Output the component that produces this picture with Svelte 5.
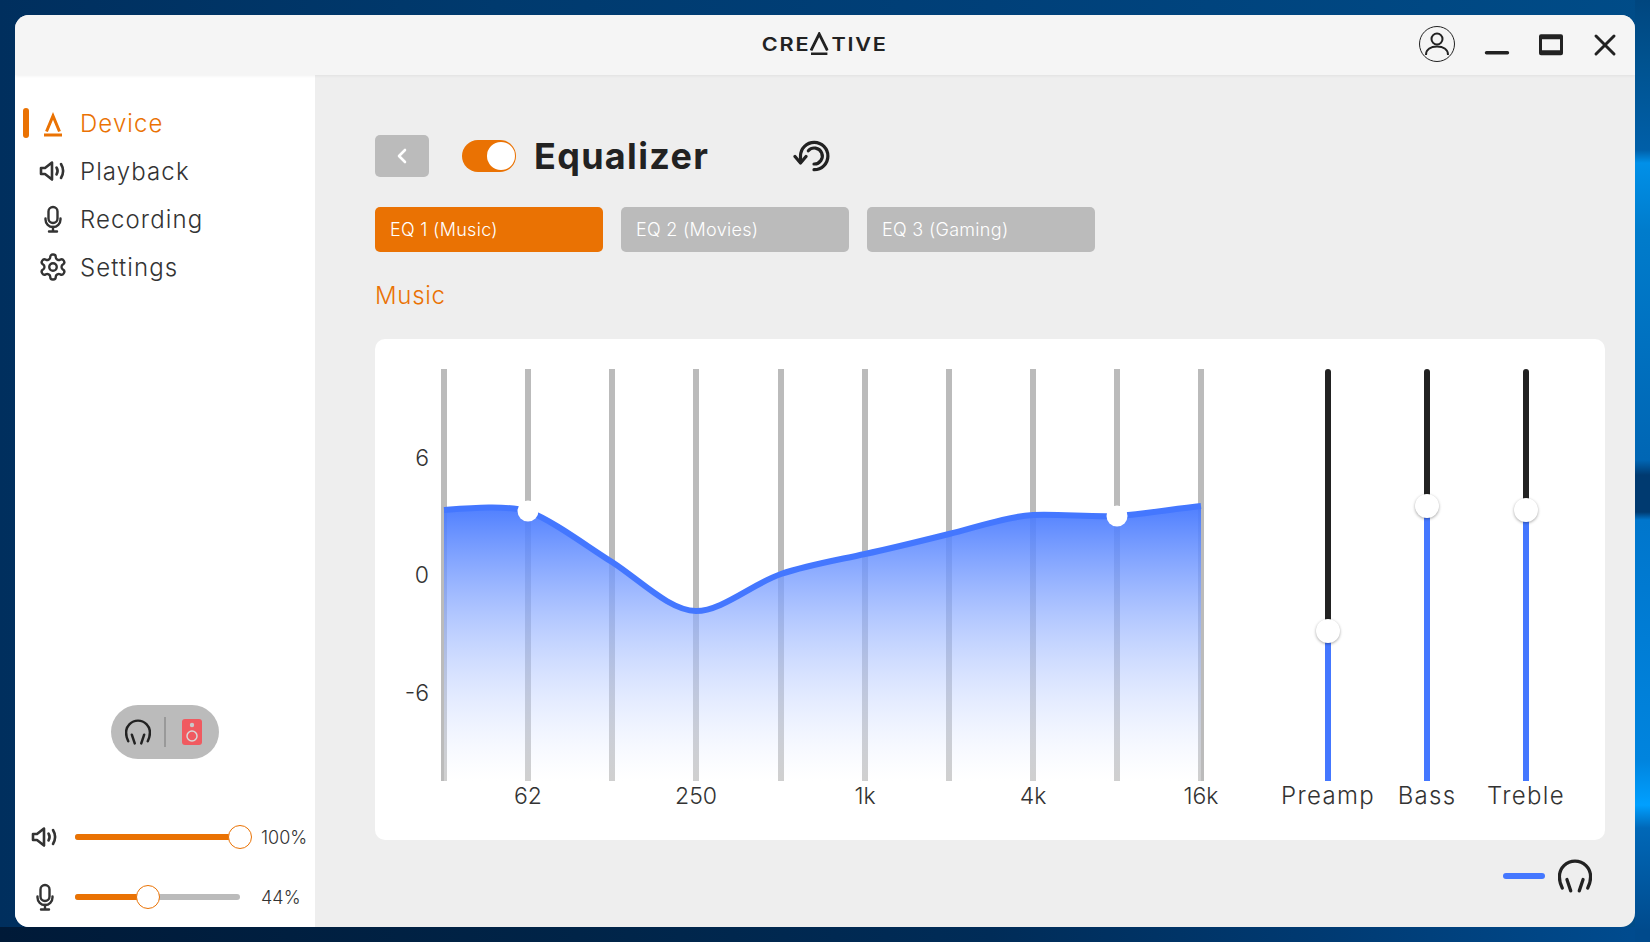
<script lang="ts">
  // Pantalla de ecualizador: barra de título, menú lateral y panel con la curva.
  const nav = [
    { label: 'Device', icon: 'logo', active: true },
    { label: 'Playback', icon: 'speaker' },
    { label: 'Recording', icon: 'mic' },
    { label: 'Settings', icon: 'gear' }
  ];
  const tabs = ['EQ 1 (Music)', 'EQ 2 (Movies)', 'EQ 3 (Gaming)'];
  const bands = [444, 528, 612, 696, 781, 865, 949, 1033, 1117, 1201];
  const xLabels = [
    { x: 528, t: '62' },
    { x: 696, t: '250' },
    { x: 865, t: '1k' },
    { x: 1033, t: '4k' },
    { x: 1201, t: '16k' }
  ];
  const yLabels = [
    { y: 466, t: '6' },
    { y: 583, t: '0' },
    { y: 701, t: '-6' }
  ];
  const curve =
    'M444 510 C470 508 505 505 528 511 C555 522 585 545 612 562 C640 580 670 611 696 611 C722 611 752 584 781 574 C808 565 838 560 865 554 C893 548 921 541 949 534 C977 527 1005 517 1033 515 C1061 514 1089 517 1117 516 C1145 514 1173 509 1201 506';
  const faders = [
    { label: 'Preamp', top: 262 },
    { label: 'Bass', top: 137 },
    { label: 'Treble', top: 141 }
  ];
  const levels = [
    { icon: 'speaker', value: 100 },
    { icon: 'mic', value: 44 }
  ];
</script>

{#snippet icon(name: string)}
  {#if name === 'logo'}
    <svg class="ico" viewBox="0 0 30 30" fill="none" stroke="currentColor" stroke-width="3">
      <path d="M8.500 23.500 15 8 21.500 23.500" />
      <path d="M6 27h18" />
    </svg>
  {:else if name === 'speaker'}
    <svg class="ico" viewBox="0 0 30 30" fill="none" stroke="currentColor" stroke-width="2.600" stroke-linecap="round" stroke-linejoin="round">
      <path d="M3 12v6h4l7 5.500v-17L7 12z" />
      <path d="M18.500 11.500c1.400 2.200 1.400 4.800 0 7" />
      <path d="M23 8c2.600 4.300 2.600 9.700 0 14" />
    </svg>
  {:else if name === 'mic'}
    <svg class="ico" viewBox="0 0 30 30" fill="none" stroke="currentColor" stroke-width="2.400" stroke-linecap="round" stroke-linejoin="round">
      <rect x="10.500" y="3" width="9" height="16" rx="4.500" />
      <path d="M7.500 14.500v1a7.500 7.500 0 0 0 15 0v-1" />
      <path d="M15 23v4M11 27.500h8" />
    </svg>
  {:else if name === 'gear'}
    <svg class="ico" viewBox="0 0 24 24" fill="none" stroke="currentColor" stroke-width="1.900" stroke-linecap="round" stroke-linejoin="round">
      <path d="M12.220 2h-.44a2 2 0 0 0-2 2v.18a2 2 0 0 1-1 1.730l-.43.25a2 2 0 0 1-2 0l-.15-.08a2 2 0 0 0-2.730.73l-.22.38a2 2 0 0 0 .73 2.730l.15.1a2 2 0 0 1 1 1.720v.51a2 2 0 0 1-1 1.740l-.15.09a2 2 0 0 0-.73 2.730l.22.38a2 2 0 0 0 2.730.73l.15-.08a2 2 0 0 1 2 0l.43.25a2 2 0 0 1 1 1.730V20a2 2 0 0 0 2 2h.44a2 2 0 0 0 2-2v-.18a2 2 0 0 1 1-1.730l.43-.25a2 2 0 0 1 2 0l.15.08a2 2 0 0 0 2.730-.73l.22-.39a2 2 0 0 0-.73-2.730l-.15-.08a2 2 0 0 1-1-1.740v-.5a2 2 0 0 1 1-1.740l.15-.09a2 2 0 0 0 .73-2.730l-.22-.38a2 2 0 0 0-2.730-.73l-.15.08a2 2 0 0 1-2 0l-.43-.25a2 2 0 0 1-1-1.730V4a2 2 0 0 0-2-2z" />
      <circle cx="12" cy="12" r="3" />
    </svg>
  {/if}
{/snippet}

{#snippet phones(size: number)}
  <svg class="phones" width={size} height={size} viewBox="0 0 24 24" fill="none" stroke="#222" stroke-width="2.300" stroke-linecap="round">
    <path d="M3 20.500C1.700 18 1 15 1 12.500a11 11 0 0 1 22 0c0 2.500-.7 5.500-2 8" />
    <path d="M6.300 14.500l2.700 8M17.700 14.500l-2.700 8" />
  </svg>
{/snippet}

<div class="desktop">
  <div class="window">
    <header class="titlebar">
      <div class="logo" aria-label="CREATIVE">
        <span>CRE</span>
        <svg width="16" height="24" viewBox="0 0 16 24" fill="none" stroke="#222" stroke-width="2.500">
          <path d="M1 18.500 8 2l7 16.500" />
          <path d="M1 21.800h14" />
        </svg>
        <span>TIVE</span>
      </div>
      <div class="win-controls">
        <svg width="38" height="38" viewBox="0 0 38 38" fill="none" stroke="#222">
          <circle cx="19" cy="19" r="17.500" stroke-width="1" />
          <circle cx="19" cy="14" r="5.500" stroke-width="2" />
          <path d="M8 30c0-6 5-8.500 11-8.500S30 24 30 30" stroke-width="2" />
        </svg>
        <svg class="ctl" width="26" height="26" viewBox="0 0 26 26" fill="none" stroke="#222" stroke-width="3.400" stroke-linecap="round">
          <path d="M2.500 21.700h21" />
        </svg>
        <svg class="ctl" width="26" height="26" viewBox="0 0 26 26" fill="#222">
          <path fill-rule="evenodd" d="M3 3.300h20a2 2 0 0 1 2 2v17a2 2 0 0 1-2 2H3a2 2 0 0 1-2-2v-17a2 2 0 0 1 2-2zm1 5v11h18v-11z" />
        </svg>
        <svg class="ctl" width="26" height="26" viewBox="0 0 26 26" fill="none" stroke="#222" stroke-width="3" stroke-linecap="round">
          <path d="M4 5l18 18M22 5 4 23" />
        </svg>
      </div>
    </header>

    <div class="body">
      <aside class="sidebar">
        <nav>
          {#each nav as item}
            <div class="nav-item" class:active={item.active}>
              <span class="marker"></span>
              {@render icon(item.icon)}
              <span>{item.label}</span>
            </div>
          {/each}
        </nav>

        <div class="output-pill">
          {@render phones(26)}
          <span class="pill-divider"></span>
          <svg width="22" height="28" viewBox="0 0 22 28">
            <rect x="1" y="1" width="20" height="26" rx="3" fill="#f05a60" />
            <circle cx="11" cy="7" r="2.200" fill="#c9c9c9" />
            <circle cx="11" cy="18" r="5" fill="none" stroke="#d8d8d8" stroke-width="1.500" />
          </svg>
        </div>

        <div class="levels">
          {#each levels as level}
            <div class="level">
              {@render icon(level.icon)}
              <div class="track">
                <div class="fill" style="width: {level.value}%"></div>
                <div class="knob" style="left: {level.value}%"></div>
              </div>
              <span class="pct">{level.value}%</span>
            </div>
          {/each}
        </div>
      </aside>

      <main class="content">
        <div class="head">
          <button class="back" aria-label="Back">
            <svg width="14" height="18" viewBox="0 0 14 18" fill="none" stroke="#fff" stroke-width="2.600" stroke-linecap="round" stroke-linejoin="round">
              <path d="M10 3 4 9l6 6" />
            </svg>
          </button>
          <span class="toggle"><span class="toggle-knob"></span></span>
          <h1>Equalizer</h1>
          <svg class="reset" width="40" height="36" viewBox="0 0 40 36" fill="none" stroke="#222" stroke-width="3.200" stroke-linecap="round" stroke-linejoin="round">
            <path d="M7.500 24V18A13.700 13.700 0 1 1 21 31.700" />
            <path d="M2 18.500 7.500 25 13 18.500" />
            <path d="M15.300 12.700A8 8 0 1 1 21 26" />
          </svg>
        </div>

        <div class="tabs">
          {#each tabs as tab, i}
            <div class="tab" class:on={i === 0}>{tab}</div>
          {/each}
        </div>

        <div class="preset">Music</div>

        <section class="card">
          <svg class="chart" width="950" height="501" viewBox="375 339 950 501">
            <defs>
              <linearGradient id="eqfill" gradientUnits="userSpaceOnUse" x1="0" y1="505" x2="0" y2="781">
                <stop offset="0" stop-color="#4477ff" stop-opacity="0.95" />
                <stop offset="1" stop-color="#ffffff" stop-opacity="0.3" />
              </linearGradient>
            </defs>
            {#each bands as x}
              <rect x={x - 3} y="369" width="6" height="412" fill="#bbbbbb" />
            {/each}
            <path d="{curve} L1201 781 L444 781 Z" fill="url(#eqfill)" />
            <path d={curve} fill="none" stroke="#4477ff" stroke-width="6" />
            <circle cx="528" cy="511" r="10.500" fill="#fff" />
            <circle cx="1117" cy="516" r="10.500" fill="#fff" />
            {#each yLabels as l}
              <text class="axis" x="429" y={l.y} text-anchor="end">{l.t}</text>
            {/each}
            {#each xLabels as l}
              <text class="axis" x={l.x} y="804" text-anchor="middle">{l.t}</text>
            {/each}
          </svg>

          <div class="faders">
            {#each faders as f}
              <div class="fader">
                <div class="fader-track">
                  <div class="fader-low" style="top: {f.top}px"></div>
                  <div class="fader-knob" style="top: {f.top}px"></div>
                </div>
                <span class="fader-label">{f.label}</span>
              </div>
            {/each}
          </div>
        </section>

        <div class="legend">
          <span class="legend-line"></span>
          {@render phones(34)}
        </div>
      </main>
    </div>
  </div>
</div>

<style>
  :global(body) {
    margin: 0;
  }

  .desktop {
    box-sizing: border-box;
    width: 1650px;
    height: 942px;
    padding: 15px;
    overflow: hidden;
    font-family: Inter, "Open Sans", sans-serif;
    font-weight: 300;
    color: #333;
    background:
      linear-gradient(to bottom, #00467f 0, #00528f 60px, #005fa8 150px, #0090e8 163px, #007ccc 230px, #0066b4 460px, #003a70 475px, #003a70 512px, #0076cc 520px, #0084de 760px, #00a0ff 805px, #0068b8 828px, #004a8c 930px) right / 15px 100% no-repeat,
      linear-gradient(to right, #001a38 0, #002448 35%, #002c58 60%, #003a72 80%, #004c90 100%) bottom / 100% 15px no-repeat,
      linear-gradient(to right, #002f5e 0, #003a6e 30%, #004079 60%, #004c88 100%);
  }

  .window {
    display: flex;
    flex-direction: column;
    height: 912px;
    border-radius: 14px;
    overflow: hidden;
    background: #eeeeee;
  }

  .titlebar {
    position: relative;
    z-index: 1;
    flex: none;
    display: flex;
    align-items: center;
    justify-content: center;
    height: 60px;
    background: #f5f5f5;
    box-shadow: 0 1px 3px rgba(0, 0, 0, 0.06);
  }

  .logo {
    display: flex;
    align-items: center;
    margin-top: -2px;
    font-size: 18.500px;
    font-weight: 600;
    letter-spacing: 1.500px;
    color: #222;
    transform: scaleX(1.170);
  }

  .logo svg {
    margin: -1px 2px 0 0;
  }

  .win-controls {
    position: absolute;
    right: 17px;
    top: 10px;
    display: flex;
    align-items: center;
    gap: 28px;
  }

  .ctl {
    display: block;
  }

  .body {
    flex: 1;
    display: flex;
    min-height: 0;
  }

  .sidebar {
    flex: none;
    display: flex;
    flex-direction: column;
    width: 300px;
    background: #fff;
  }

  nav {
    padding-top: 24px;
  }

  .nav-item {
    display: flex;
    align-items: center;
    height: 48px;
    padding-left: 8px;
    font-size: 24px;
    letter-spacing: 1.100px;
    color: #333;
  }

  .nav-item.active {
    color: #ea7203;
  }

  .marker {
    width: 6px;
    height: 30px;
    margin-right: 9px;
    border-radius: 3px;
  }

  .nav-item.active .marker {
    background: #ea7203;
  }

  .ico {
    flex: none;
    width: 30px;
    height: 30px;
  }

  .nav-item .ico {
    margin-right: 12px;
  }

  .output-pill {
    display: flex;
    align-items: center;
    align-self: center;
    box-sizing: border-box;
    width: 108px;
    height: 54px;
    margin: auto 0 48px;
    padding-left: 14px;
    border-radius: 27px;
    background: #bbbbbb;
  }

  .pill-divider {
    width: 2px;
    height: 30px;
    margin: 0 15px 0 13px;
    background: #999;
  }

  .level {
    display: flex;
    align-items: center;
    height: 60px;
    padding-left: 15px;
    color: #333;
  }

  .track {
    position: relative;
    width: 165px;
    height: 6px;
    margin-left: 15px;
    border-radius: 3px;
    background: #bbbbbb;
  }

  .fill {
    height: 100%;
    border-radius: 3px;
    background: #ea7203;
  }

  .knob {
    position: absolute;
    top: 50%;
    box-sizing: border-box;
    width: 24px;
    height: 24px;
    margin: -12px 0 0 -12px;
    border: 1px solid #ea7203;
    border-radius: 50%;
    background: #fff;
  }

  .pct {
    margin-left: 21px;
    font-size: 18px;
  }

  .content {
    flex: 1;
    display: flex;
    flex-direction: column;
    min-width: 0;
    padding: 60px 30px 0 60px;
  }

  .head {
    display: flex;
    align-items: center;
    height: 42px;
  }

  .back {
    display: flex;
    align-items: center;
    justify-content: center;
    width: 54px;
    height: 42px;
    padding: 0;
    border: 0;
    border-radius: 5px;
    background: #bbbbbb;
  }

  .toggle {
    display: flex;
    align-items: center;
    justify-content: flex-end;
    box-sizing: border-box;
    width: 54px;
    height: 32px;
    margin-left: 33px;
    padding-right: 1px;
    border-radius: 16px;
    background: #ea7203;
  }

  .toggle-knob {
    width: 28px;
    height: 28px;
    border-radius: 50%;
    background: #fff;
  }

  h1 {
    width: 259px;
    margin: 0 0 0 18px;
    font-size: 36px;
    font-weight: 700;
    letter-spacing: 1.300px;
    color: #222;
  }

  .tabs {
    display: flex;
    gap: 18px;
    margin-top: 30px;
  }

  .tab {
    box-sizing: border-box;
    width: 228px;
    height: 45px;
    padding-left: 15px;
    line-height: 45px;
    font-size: 18px;
    letter-spacing: 0.300px;
    color: #fff;
    border-radius: 5px;
    background: #bbbbbb;
  }

  .tab.on {
    background: #ea7203;
  }

  .preset {
    height: 87px;
    padding-top: 27px;
    box-sizing: border-box;
    font-size: 24px;
    letter-spacing: 0.700px;
    line-height: 34px;
    color: #ea7203;
  }

  .card {
    display: flex;
    height: 501px;
    border-radius: 10px;
    background: #fff;
  }

  .chart {
    flex: none;
    display: block;
  }

  .axis {
    font-size: 23px;
    fill: #333;
  }

  .faders {
    display: flex;
    gap: 93px;
  }

  .fader {
    display: flex;
    flex-direction: column;
    align-items: center;
    width: 6px;
    padding-top: 30px;
  }

  .fader-track {
    position: relative;
    flex: none;
    width: 6px;
    height: 412px;
    border-radius: 3px 3px 0 0;
    background: #222;
  }

  .fader-low {
    position: absolute;
    left: 0;
    right: 0;
    bottom: 0;
    background: #4477ff;
  }

  .fader-knob {
    position: absolute;
    left: 50%;
    width: 24px;
    height: 24px;
    margin: -12px 0 0 -12px;
    border-radius: 50%;
    background: #fff;
    box-shadow: 0 1px 3px rgba(0, 0, 0, 0.35);
  }

  .fader-label {
    font-size: 24px;
    letter-spacing: 1.300px;
    line-height: 30px;
    white-space: nowrap;
    color: #333;
  }

  .legend {
    display: flex;
    align-items: center;
    justify-content: flex-end;
    gap: 13px;
    height: 36px;
    margin-top: 18px;
    padding-right: 13px;
  }

  .legend-line {
    width: 42px;
    height: 6px;
    border-radius: 3px;
    background: #4477ff;
  }
</style>
